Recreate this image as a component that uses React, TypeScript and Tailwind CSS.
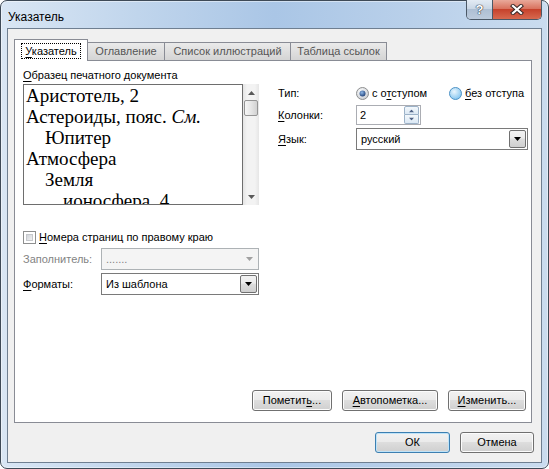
import React from 'react';

function Arrow({ color = '#000' }: { color?: string }) {
  return (
    <svg width="7" height="4" viewBox="0 0 7 4">
      <path d="M0 0h7L3.5 4z" fill={color} />
    </svg>
  );
}

function U({ children }: { children: React.ReactNode }) {
  return <span className="underline underline-offset-[2px]">{children}</span>;
}

function WinButton({
  children,
  className = '',
  isDefault = false,
}: {
  children: React.ReactNode;
  className?: string;
  isDefault?: boolean;
}) {
  return (
    <button
      className={`flex h-[21px] items-center justify-center rounded-[3px] border text-[11px] text-black bg-[linear-gradient(#f2f2f2_0%,#ebebeb_45%,#dddddd_50%,#cfcfcf_100%)] ${
        isDefault
          ? 'border-[#3c7fb1] shadow-[inset_0_0_0_1px_#bfe3f8]'
          : 'border-[#707070] shadow-[inset_0_0_0_1px_#fcfcfc]'
      } ${className}`}
    >
      {children}
    </button>
  );
}

function Combo({
  value,
  className = '',
  disabled = false,
}: {
  value: string;
  className?: string;
  disabled?: boolean;
}) {
  return (
    <div
      className={`flex h-[22px] items-center border text-[11px] ${
        disabled ? 'border-[#adb2b5] bg-[#f4f4f4] text-[#838383]' : 'border-[#7a7a7a] bg-white text-black'
      } ${className}`}
    >
      <span className="flex-1 pl-[4px]">{value}</span>
      {disabled ? (
        <div className="flex h-[18px] w-[17px] items-center justify-center">
          <Arrow color="#a0a0a0" />
        </div>
      ) : (
        <div className="mr-px flex h-[18px] w-[17px] items-center justify-center rounded-[2px] border border-[#707070] bg-[linear-gradient(#f2f2f2_0%,#ebebeb_45%,#dddddd_50%,#cfcfcf_100%)]">
          <Arrow />
        </div>
      )}
    </div>
  );
}

function Radio({ checked }: { checked?: boolean }) {
  return (
    <svg width="13" height="13" viewBox="0 0 13 13">
      <defs>
        <radialGradient id={checked ? 'rc' : 'ru'} cx="40%" cy="35%" r="70%">
          <stop offset="0%" stopColor={checked ? '#ffffff' : '#eaf6fd'} />
          <stop offset="100%" stopColor={checked ? '#c8ccd2' : '#7dc2ef'} />
        </radialGradient>
        <radialGradient id="dot" cx="40%" cy="35%" r="70%">
          <stop offset="0%" stopColor="#8fb8e8" />
          <stop offset="100%" stopColor="#1b3c74" />
        </radialGradient>
      </defs>
      <circle cx="6.5" cy="6.5" r="6" fill={`url(#${checked ? 'rc' : 'ru'})`} stroke={checked ? '#8e8f8f' : '#4f93c5'} />
      {checked && <circle cx="6.5" cy="6.5" r="3" fill="url(#dot)" />}
    </svg>
  );
}

function Tab({ label, active = false, w }: { label: React.ReactNode; active?: boolean; w: string }) {
  if (active) {
    return (
      <div
        className={`relative z-10 -mb-px flex h-[22px] ${w} items-center justify-center border border-b-0 border-[#898c95] bg-white text-[11px] text-black`}
      >
        <span className="border border-dotted border-black px-[3px] leading-[14px]">{label}</span>
      </div>
    );
  }
  return (
    <div
      className={`flex h-[18px] ${w} items-center justify-center border border-b-0 border-l-0 border-[#898c95] bg-[linear-gradient(#eaeaea,#d4d4d4)] text-[11px] text-[#555]`}
    >
      {label}
    </div>
  );
}

function Preview() {
  return (
    <div className="flex h-[121px]">
      <div className="h-full w-[220px] overflow-hidden border border-[#6e6e6e] bg-white pl-[2px] font-['Liberation_Serif',serif] text-[19px] leading-[21px] text-black">
        <div>Аристотель, 2</div>
        <div>
          Астероиды, пояс. <i>См.</i>
        </div>
        <div className="pl-[19px]">Юпитер</div>
        <div>Атмосфера</div>
        <div className="pl-[19px]">Земля</div>
        <div className="pl-[37px]">ионосфера, 4</div>
      </div>
      <div className="flex h-full w-[16px] flex-col items-center bg-[linear-gradient(to_right,#e4e4e4,#f3f3f3_25%,#f3f3f3_75%,#e6e6e6)]">
        <div className="mt-[7px] rotate-180">
          <Arrow color="#5a5a5a" />
        </div>
        <div className="mt-[5px] h-[16px] w-[14px] rounded-[2px] border border-[#959595] bg-[linear-gradient(to_right,#f6f6f6,#e6e6e6_50%,#d2d2d2)]" />
        <div className="mt-auto mb-[6px]">
          <Arrow color="#5a5a5a" />
        </div>
      </div>
    </div>
  );
}

export default function App() {
  return (
    <div className="h-[469px] w-[549px] bg-white font-['Liberation_Sans',Arial,sans-serif]">
      <div className="flex h-full w-full flex-col rounded-[7px] border border-[#3e4a57] bg-[linear-gradient(90deg,#d9e6f4_0%,#c0d5ec_25%,#aac6e6_50%,#b9d0ea_75%,#cadcef_100%)] px-[6px] pb-[5px] shadow-[inset_0_0_0_1px_rgba(255,255,255,0.45)]">
        {/* title bar */}
        <div className="flex h-[27px] items-start">
          <div className="mt-[9px] flex-1 pl-[1px] text-[12px] leading-[14px] text-black">Указатель</div>
          <div className="-mt-px flex h-[20px] overflow-hidden rounded-b-[5px] border border-t-0 border-[#4b5866]">
            <div className="flex w-[26px] items-center justify-center border-r border-[#4b5866] bg-[linear-gradient(#e3ebf4_0%,#cad7e5_45%,#aebfd3_50%,#bccbdc_100%)]">
              <span className="text-[13px] font-bold leading-none text-white [text-shadow:0_0_1px_#2e3a46,0_0_1px_#2e3a46,0_0_1px_#2e3a46]">
                ?
              </span>
            </div>
            <div className="flex w-[48px] items-center justify-center bg-[linear-gradient(#e9a99a_0%,#d9735f_45%,#c6422c_50%,#d7694f_100%)]">
              <svg width="14" height="11" viewBox="0 0 14 11">
                <path d="M3 2l8 7M11 2l-8 7" stroke="#3b2a28" strokeWidth="4.2" strokeLinecap="square" />
                <path d="M3 2l8 7M11 2l-8 7" stroke="#ffffff" strokeWidth="2.2" strokeLinecap="square" />
              </svg>
            </div>
          </div>
        </div>

        {/* client area */}
        <div className="flex flex-1 flex-col border border-[#6f7f91] bg-[#f0f0f0] text-[11px] leading-[13px] text-black">
          <div className="ml-[6px] mt-[10px] flex h-[21px] items-end">
            <Tab active w="w-[74px]" label={<><U>У</U>казатель</>} />
            <Tab w="w-[77px]" label="Оглавление" />
            <Tab w="w-[126px]" label="Список иллюстраций" />
            <Tab w="w-[96px]" label="Таблица ссылок" />
          </div>

          <div className="ml-[6px] flex h-[363px] w-[518px] flex-col border border-[#898c95] bg-white">
            <div className="flex pl-[8px]">
              {/* left column */}
              <div className="flex w-[236px] flex-col">
                <div className="mt-[8px] mb-[2px]">
                  <U>О</U>бразец печатного документа
                </div>
                <Preview />
                <div className="mt-[26px] flex h-[13px] items-center gap-[3px]">
                  <div className="h-[13px] w-[13px] border border-[#8e8f8f] bg-white p-[2px]">
                    <div className="h-full w-full bg-[linear-gradient(135deg,#cbcfd5,#f6f6f6)] shadow-[inset_0_0_0_1px_#c6c8cc]" />
                  </div>
                  <span>
                    <U>Н</U>омера страниц по правому краю
                  </span>
                </div>
                <div className="mt-[4px] flex items-center">
                  <span className="w-[78px] text-[#838383]">Заполнитель:</span>
                  <Combo disabled value="......." className="w-[158px]" />
                </div>
                <div className="mt-[3px] flex items-center">
                  <span className="w-[78px]">
                    <U>Ф</U>орматы:
                  </span>
                  <Combo value="Из шаблона" className="w-[158px]" />
                </div>
              </div>

              {/* right column */}
              <div className="ml-[19px] flex flex-col">
                <div className="mt-[26px] flex h-[13px] items-center">
                  <span className="w-[78px]">Тип:</span>
                  <Radio checked />
                  <span className="ml-[3px] w-[77px]">
                    с о<U>т</U>ступом
                  </span>
                  <Radio />
                  <span className="ml-[3px]">
                    <U>б</U>ез отступа
                  </span>
                </div>
                <div className="mt-[5px] flex items-center">
                  <span className="w-[78px]">
                    <U>К</U>олонки:
                  </span>
                  <div className="flex h-[20px] w-[65px] items-center border border-[#abadb3] bg-white">
                    <span className="flex-1 pl-[3px]">2</span>
                    <div className="mr-px flex flex-col">
                      <div className="flex h-[9px] w-[15px] items-center justify-center rounded-t-[2px] border border-[#9cb2c8] bg-[linear-gradient(#f3f8fc,#dbe8f4)]">
                        <div className="rotate-180 scale-75">
                          <Arrow color="#4d6185" />
                        </div>
                      </div>
                      <div className="flex h-[9px] w-[15px] items-center justify-center rounded-b-[2px] border border-t-0 border-[#9cb2c8] bg-[linear-gradient(#f3f8fc,#dbe8f4)]">
                        <div className="scale-75">
                          <Arrow color="#4d6185" />
                        </div>
                      </div>
                    </div>
                  </div>
                </div>
                <div className="mt-[3px] flex items-center">
                  <span className="w-[78px]">
                    <U>Я</U>зык:
                  </span>
                  <Combo value="русский" className="w-[172px]" />
                </div>
              </div>
            </div>

            <div className="mt-auto mb-[11px] mr-[5px] flex justify-end gap-[10px]">
              <WinButton className="w-[80px]">
                Пометит<U>ь</U>...
              </WinButton>
              <WinButton className="w-[96px]">
                <U>А</U>втопометка...
              </WinButton>
              <WinButton className="w-[78px]">
                <U>И</U>зменить...
              </WinButton>
            </div>
          </div>

          <div className="mt-[9px] mr-[7px] flex justify-end gap-[10px]">
            <WinButton isDefault className="w-[75px]">
              ОК
            </WinButton>
            <WinButton className="w-[74px]">Отмена</WinButton>
          </div>
        </div>
      </div>
    </div>
  );
}
